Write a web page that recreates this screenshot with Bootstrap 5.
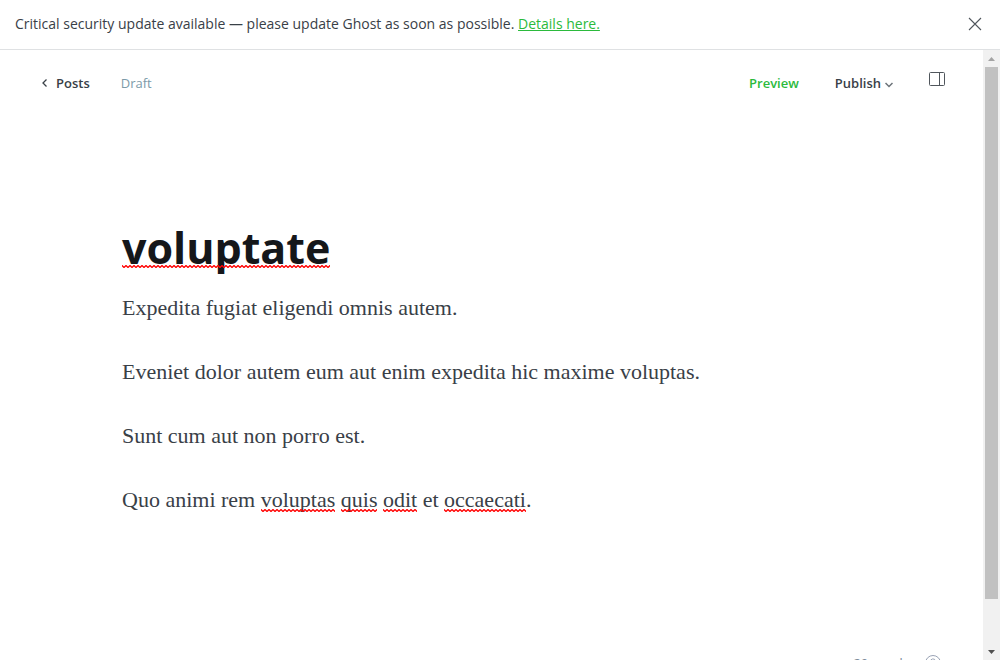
<!DOCTYPE html>
<html lang="en">
<head>
<meta charset="utf-8">
<meta name="viewport" content="width=device-width, initial-scale=1">
<title>Editor - Ghost</title>
<link href="https://cdn.jsdelivr.net/npm/bootstrap@5.3.0/dist/css/bootstrap.min.css" rel="stylesheet">
<style>
body { font-family: "Open Sans", "Noto Sans", sans-serif; font-size: 13px; line-height: 20px; color: #394047; background: #fff; }
button { font-weight: 600; }
.gh-alert { height: 50px; padding: 0 18px 2px 15px; border-bottom: 1px solid #dfe1e3; font-size: 14px; }
.gh-alert a { color: #2bba3c; }
.gh-btn { border: 0; background: none; padding: 0; color: #394047; }
.gh-btn.gh-green { color: #2bba3c; }
.gh-editor { height: 100vh; }
.gh-head { padding: 18px 38px 0 41px; }
.gh-head a { color: #394047; }
.gh-label { padding-top: 5px; }
.gh-draft { color: #7c9aa8; margin-left: 31px; }
.gh-actions { gap: 36px; }
.gh-page { padding: 127px 121px 0 122px; }
.gh-title { font-size: 43px; line-height: 56px; font-weight: 700; color: #15171a; margin: 0 0 16px; outline: 0; }
.gh-body { font-family: "Liberation Serif", serif; font-size: 22px; line-height: 32px; outline: 0; }
.gh-body p { margin: 0 0 32px; }
.typo { position: relative; display: inline-block; }
.typo::after { content: ""; position: absolute; left: 0; right: 0; bottom: 4px; height: 3px; background: url("data:image/svg+xml,%3Csvg xmlns='http://www.w3.org/2000/svg' width='4' height='3'%3E%3Cpath d='M-1 1.500L0 .5L2 2.500L4 .5L5 1.500' fill='none' stroke='%23f00' stroke-width='1.300'/%3E%3C/svg%3E") repeat-x; }
.gh-title .typo::after { bottom: 8px; }
.gh-foot { padding: 0 42px 37px 0; color: #7c8b9a; gap: 16px; }
.gh-scroll { width: 17px; background: #f1f1f1; padding: 7px 2px 6px; }
.gh-thumb { background: #c1c1c1; margin-top: 6px; flex: 532 0 0; }
.gh-rest { flex: 51 0 0; }
</style>
</head>
<body>
<div class="vh-100 d-flex flex-column overflow-hidden">
  <div class="gh-alert d-flex align-items-center justify-content-between flex-shrink-0" role="alert">
    <span>Critical security update available — please update Ghost as soon as possible. <a href="#">Details here.</a></span>
    <button class="gh-btn d-flex" type="button" aria-label="Close">
      <svg width="14" height="14" viewBox="0 0 14 14" fill="none" stroke="#50565c" stroke-width="1.1"><path d="M1 1l12 12M13 1L1 13"/></svg>
    </button>
  </div>
  <div class="d-flex flex-grow-1 overflow-hidden">
    <main class="flex-grow-1 overflow-hidden">
      <div class="gh-editor d-flex flex-column">
        <header class="gh-head d-flex justify-content-between">
          <div class="gh-label d-flex align-items-center">
            <a href="#" class="d-flex align-items-center fw-semibold text-decoration-none">
              <svg class="me-2" width="7" height="10" viewBox="0 0 7 10" fill="none" stroke="#394047" stroke-width="1.3"><path d="M5.500 1.500L2 5l3.500 3.500"/></svg>Posts</a>
            <span class="gh-draft">Draft</span>
          </div>
          <div class="gh-actions d-flex align-items-start">
            <button class="gh-btn gh-green gh-label" type="button">Preview</button>
            <button class="gh-btn gh-label d-flex align-items-center" type="button">Publish
              <svg class="ms-1 mt-1" width="8" height="6" viewBox="0 0 8 6" fill="none" stroke="#6b7278" stroke-width="1.5"><path d="M.5 1L4 4.500L7.500 1"/></svg>
            </button>
            <button class="gh-btn d-flex pt-1" type="button" aria-label="Settings">
              <svg width="16" height="14" viewBox="0 0 16 14" fill="none" stroke="#50565c"><rect x=".5" y=".5" width="15" height="13" rx="1"/><path d="M10.500 .5v13"/></svg>
            </button>
          </div>
        </header>
        <div class="gh-page flex-grow-1">
          <h1 class="gh-title" contenteditable="true" spellcheck="false" role="textbox" aria-label="Post title"><span class="typo">voluptate</span></h1>
          <div class="gh-body" contenteditable="true" spellcheck="false" role="textbox" aria-multiline="true" aria-label="Post content">
            <p>Expedita fugiat eligendi omnis autem.</p>
            <p>Eveniet dolor autem eum aut enim expedita hic maxime voluptas.</p>
            <p>Sunt cum aut non porro est.</p>
            <p>Quo animi rem <span class="typo">voluptas</span> <span class="typo">quis</span> <span class="typo">odit</span> et <span class="typo">occaecati</span>.</p>
          </div>
        </div>
        <footer class="gh-foot d-flex justify-content-end align-items-center">
          <span>29 words</span>
          <a href="#" class="d-flex" aria-label="Help">
            <svg width="16" height="16" viewBox="0 0 16 16" fill="none" stroke="#9aa3b5"><circle cx="8" cy="8" r="7.500"/><path d="M5.500 6.500a2.500 2.500 0 1 1 3.500 2.200q-1 .5-1 1.500M8 11.500v1"/></svg>
          </a>
        </footer>
      </div>
    </main>
    <div class="gh-scroll d-flex flex-column flex-shrink-0" aria-hidden="true">
      <svg class="align-self-center flex-shrink-0" width="7" height="4" viewBox="0 0 7 4"><path d="M0 4L3.500 0L7 4z" fill="#a3a3a3"/></svg>
      <div class="gh-thumb"></div>
      <div class="gh-rest"></div>
      <svg class="align-self-center flex-shrink-0" width="7" height="4" viewBox="0 0 7 4"><path d="M0 0L3.500 4L7 0z" fill="#505050"/></svg>
    </div>
  </div>
</div>
<script src="https://cdn.jsdelivr.net/npm/bootstrap@5.3.0/dist/js/bootstrap.bundle.min.js"></script>
</body>
</html>
